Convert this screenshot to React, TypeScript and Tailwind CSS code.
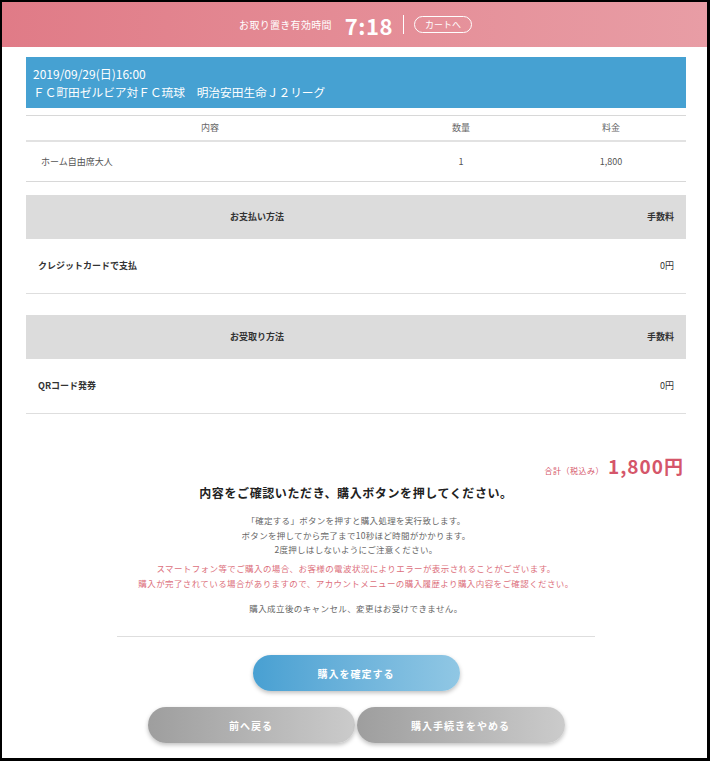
import React from "react";

const font = { fontFamily: '"Noto Sans CJK JP", "Noto Sans", sans-serif' };

export default function App() {
    return (
        <div className="w-[710px] h-[761px] bg-black pt-[2px] pl-[2px] pr-[3px] pb-[3px]" style={font}>
            <div className="w-full h-full bg-white flex flex-col overflow-hidden">
                {/* timer header */}
                <div className="h-[45px] shrink-0 bg-gradient-to-r from-[#e07b87] to-[#e89da5] flex items-center justify-center text-white">
                    <span className="text-[10px] tracking-[0.3px] mr-[13px] ml-[2px]">お取り置き有効時間</span>
                    <span className="text-[22px] font-bold leading-none tracking-[0.5px]">7:18</span>
                    <span className="w-px h-[19px] bg-white mx-[10px]" />
                    <span className="border border-white rounded-full text-[9px] leading-none px-[10px] py-[3px]">カートへ</span>
                </div>

                <div className="pl-[24px] pr-[21px] pt-[10px]">
                    <div className="bg-[#46a1d2] text-white px-[7px] pt-[8px] pb-[7px] text-[12px] leading-[18px]">
                        <div>2019/09/29(日)16:00</div>
                        <div className="text-[11.7px]">ＦＣ町田ゼルビア対ＦＣ琉球　明治安田生命Ｊ２リーグ</div>
                    </div>

                    <div className="mt-[7px] border-t border-[#d8d8d8]">
                        <div className="grid grid-cols-[368px_134px_1fr] text-[9px] text-[#666] h-[26px] items-center border-b-2 border-[#e2e2e2]">
                            <span className="text-center">内容</span>
                            <span className="text-center">数量</span>
                            <span className="text-center pl-[8px]">料金</span>
                        </div>
                        <div className="grid grid-cols-[368px_134px_1fr] text-[9px] text-[#555] h-[40px] items-center border-b border-[#d8d8d8]">
                            <span className="pl-[15px]">ホーム自由席大人</span>
                            <span className="text-center">1</span>
                            <span className="text-center pl-[8px]">1,800</span>
                        </div>
                    </div>

                    <Section title="お支払い方法" label="クレジットカードで支払" gap="mt-[13px]" />
                    <Section title="お受取り方法" label="QRコード発券" gap="mt-[21px]" />

                    <div className="flex justify-end items-baseline mt-[42px] pr-[2px] text-[#d5566a]">
                        <span className="text-[8px] tracking-[0.5px] mr-[4px]">合計（税込み）</span>
                        <span className="text-[19px] font-bold leading-none tracking-[1px]">1,800円</span>
                    </div>

                    <div className="text-center mt-[7px] text-[12px] font-bold text-[#222] tracking-[0.6px]">
                        内容をご確認いただき、購入ボタンを押してください。
                    </div>

                    <div className="text-center mt-[11px] text-[8.5px] leading-[14.5px] text-[#666] tracking-[0.3px]">
                        <p>「確定する」ボタンを押すと購入処理を実行致します。</p>
                        <p>ボタンを押してから完了まで10秒ほど時間がかかります。</p>
                        <p>2度押しはしないようにご注意ください。</p>
                    </div>
                    <div className="text-center mt-[4px] text-[8.5px] leading-[15px] text-[#dc6f7c] tracking-[0.4px]">
                        <p>スマートフォン等でご購入の場合、お客様の電波状況によりエラーが表示されることがございます。</p>
                        <p>購入が完了されている場合がありますので、アカウントメニューの購入履歴より購入内容をご確認ください。</p>
                    </div>
                    <p className="text-center mt-[11px] text-[8.5px] text-[#666] tracking-[0.4px]">
                        購入成立後のキャンセル、変更はお受けできません。
                    </p>

                    <div className="mx-[91px] mt-[22px] border-t border-[#dedede]" />

                    <div className="flex justify-center mt-[18px]">
                        <button className="w-[207px] h-[36px] rounded-full bg-gradient-to-r from-[#48a0d2] to-[#90c7e4] text-white text-[10px] font-bold tracking-[1px] shadow-[0_2px_4px_rgba(0,0,0,0.25)]">
                            購入を確定する
                        </button>
                    </div>
                    <div className="flex justify-center gap-[2px] mt-[16px]">
                        <button className="w-[207px] h-[36px] rounded-full bg-gradient-to-r from-[#9e9e9e] to-[#cbcbcb] text-white text-[10px] font-bold tracking-[1px] shadow-[0_2px_4px_rgba(0,0,0,0.25)]">
                            前へ戻る
                        </button>
                        <button className="w-[208px] h-[36px] rounded-full bg-gradient-to-r from-[#9e9e9e] to-[#cbcbcb] text-white text-[10px] font-bold tracking-[1px] shadow-[0_2px_4px_rgba(0,0,0,0.25)]">
                            購入手続きをやめる
                        </button>
                    </div>
                </div>
            </div>
        </div>
    );
}

function Section({ title, label, gap }: { title: string; label: string; gap: string }) {
    return (
        <div className={gap}>
            <div className="bg-[#dcdcdc] h-[44px] flex items-center text-[9px] font-bold text-[#333]">
                <span className="w-[462px] text-center">{title}</span>
                <span className="flex-1 text-right pr-[12px]">手数料</span>
            </div>
            <div className="h-[55px] flex items-center justify-between border-b border-[#dedede] text-[9px] text-[#333] px-[12px]">
                <span className="font-bold">{label}</span>
                <span>0円</span>
            </div>
        </div>
    );
}
